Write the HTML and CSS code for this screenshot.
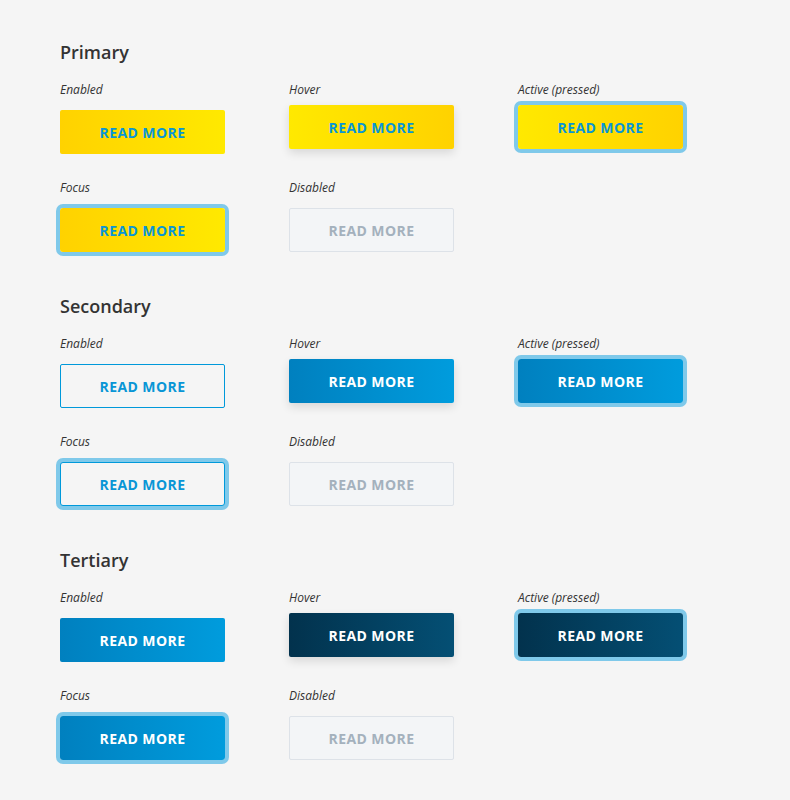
FILE: index.html
```html
<!DOCTYPE html>
<html lang="en">
<head>
    <meta charset="UTF-8">
    <meta name="viewport" content="width=device-width, initial-scale=1.0">
    <title>Buttons</title>
    <link rel="stylesheet" href="styles.css">
</head>
<body>
    <div class="container">
        <section class="group">
            <h2>Primary</h2>
            <div class="grid">
                <div class="cell"><span class="state">Enabled</span><button class="btn primary">Read more</button></div>
                <div class="cell"><span class="state">Hover</span><button class="btn primary is-hover">Read more</button></div>
                <div class="cell"><span class="state">Active (pressed)</span><button class="btn primary is-active">Read more</button></div>
                <div class="cell"><span class="state">Focus</span><button class="btn primary is-focus">Read more</button></div>
                <div class="cell"><span class="state">Disabled</span><button class="btn" disabled>Read more</button></div>
            </div>
        </section>

        <section class="group">
            <h2>Secondary</h2>
            <div class="grid">
                <div class="cell"><span class="state">Enabled</span><button class="btn secondary">Read more</button></div>
                <div class="cell"><span class="state">Hover</span><button class="btn secondary is-hover">Read more</button></div>
                <div class="cell"><span class="state">Active (pressed)</span><button class="btn secondary is-active">Read more</button></div>
                <div class="cell"><span class="state">Focus</span><button class="btn secondary is-focus">Read more</button></div>
                <div class="cell"><span class="state">Disabled</span><button class="btn" disabled>Read more</button></div>
            </div>
        </section>

        <section class="group">
            <h2>Tertiary</h2>
            <div class="grid">
                <div class="cell"><span class="state">Enabled</span><button class="btn tertiary">Read more</button></div>
                <div class="cell"><span class="state">Hover</span><button class="btn tertiary is-hover">Read more</button></div>
                <div class="cell"><span class="state">Active (pressed)</span><button class="btn tertiary is-active">Read more</button></div>
                <div class="cell"><span class="state">Focus</span><button class="btn tertiary is-focus">Read more</button></div>
                <div class="cell"><span class="state">Disabled</span><button class="btn" disabled>Read more</button></div>
            </div>
        </section>
    </div>
</body>
</html>
```

FILE: styles.css
```css
body {
    margin: 0;
    font-family: "Open Sans", Arial, sans-serif;
    background-color: #f5f5f5;
    color: #333;
}
.container {
    padding: 40px 60px 30px;
}
.group {
    margin-bottom: 42px;
}
.group:last-child {
    margin-bottom: 0;
}
h2 {
    margin: 0 0 17px;
    font-size: 18px;
    font-weight: 600;
    line-height: 24px;
    color: #333;
}
.grid {
    display: grid;
    grid-template-columns: repeat(3, 165px);
    column-gap: 64px;
    row-gap: 25px;
}
.cell {
    display: flex;
    flex-direction: column;
}
.state {
    font-size: 12px;
    font-style: italic;
    line-height: 18px;
    margin-bottom: 11px;
    color: #333;
}
.btn {
    width: 165px;
    height: 44px;
    padding: 0;
    border: 1px solid #dde2e8;
    border-radius: 2px;
    background: #f3f5f7;
    color: #a4b1bd;
    font-family: "Open Sans", Arial, sans-serif;
    font-size: 14px;
    font-weight: 700;
    letter-spacing: 0.4px;
    text-transform: uppercase;
    cursor: pointer;
}
.btn:disabled {
    cursor: default;
}
.primary {
    border: none;
    background: linear-gradient(90deg, #ffd200, #ffe900);
    color: #0996d6;
}
.primary.is-hover,
.primary.is-active {
    background: linear-gradient(90deg, #ffe900, #ffd200);
}
.secondary {
    border: 1px solid #0099da;
    background: #f5f5f5;
    color: #0996d6;
}
.secondary.is-hover,
.secondary.is-active {
    border: none;
    background: linear-gradient(90deg, #0080bf, #009cdd);
    color: #fff;
}
.tertiary {
    border: none;
    background: linear-gradient(90deg, #0080bf, #009cdd);
    color: #fff;
}
.tertiary.is-hover,
.tertiary.is-active {
    background: linear-gradient(90deg, #02324d, #044f74);
}
.tertiary.is-focus {
    background: linear-gradient(90deg, #0080bf, #009cdd);
}
.is-hover {
    transform: translateY(-5px);
    box-shadow: 0 4px 10px rgba(0, 0, 0, 0.12);
}
.is-active {
    transform: translateY(-5px);
    box-shadow: 0 0 0 4px #7fc9ea;
    border-radius: 3px;
}
.is-focus {
    box-shadow: 0 0 0 4px #7fc9ea;
    border-radius: 3px;
}
```
